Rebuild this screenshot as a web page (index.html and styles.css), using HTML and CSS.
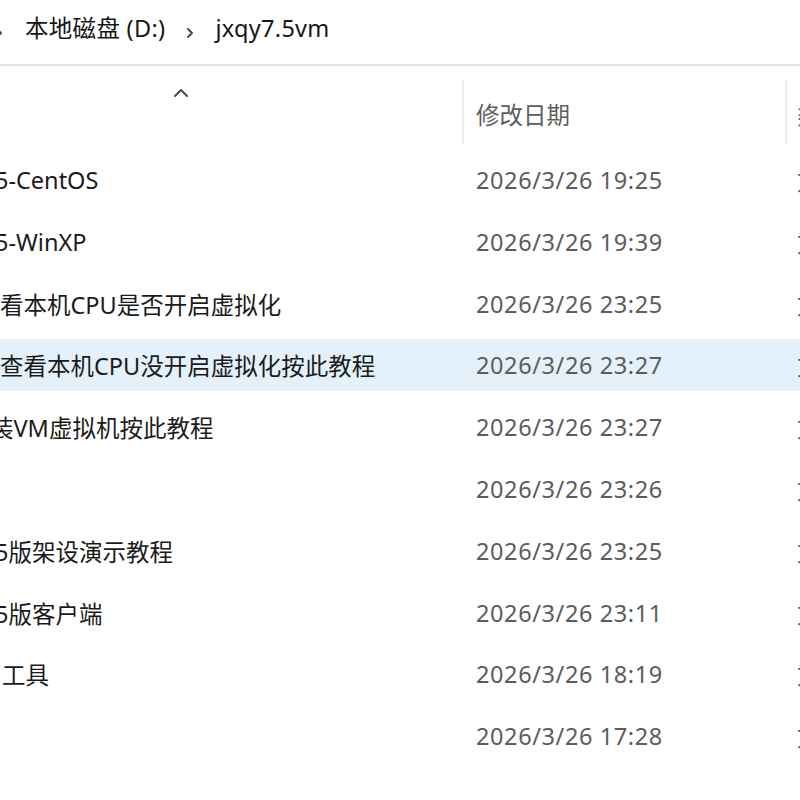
FILE: index.html
```html
<!DOCTYPE html>
<html lang="zh-CN">
  <head>
    <meta charset="UTF-8" />
    <meta name="viewport" content="width=device-width, initial-scale=1.0" />
    <title>jxqy7.5vm</title>
    <link rel="stylesheet" href="styles.css">
  </head>
  <body>
    <div class="explorer">
      <nav class="crumbs">
        <svg class="chev chev-cut" viewBox="0 0 8 12" width="8" height="12"><path d="M2 2l4 4-4 4" /></svg>
        <span class="crumb">本地磁盘 (D:)</span>
        <svg class="chev" viewBox="0 0 8 12" width="8" height="12"><path d="M2 2l4 4-4 4" /></svg>
        <span class="crumb">jxqy7.5vm</span>
      </nav>

      <div class="list">
        <div class="head">
          <div class="col-name">
            <svg class="sort" viewBox="0 0 16 10" width="16" height="10"><path d="M2 8l6-6 6 6" /></svg>
          </div>
          <div class="col-date">修改日期</div>
          <div class="col-type">类型</div>
        </div>

        <div class="rows">
          <div class="row">
            <div class="col-name"><span class="cut-digit">5-CentOS</span></div>
            <div class="col-date">2026/3/26 19:25</div>
            <div class="col-type">文件夹</div>
          </div>
          <div class="row">
            <div class="col-name"><span class="cut-digit">5-WinXP</span></div>
            <div class="col-date">2026/3/26 19:39</div>
            <div class="col-type">文件夹</div>
          </div>
          <div class="row">
            <div class="col-name"><span>看本机CPU是否开启虚拟化</span></div>
            <div class="col-date">2026/3/26 23:25</div>
            <div class="col-type">文件夹</div>
          </div>
          <div class="row selected">
            <div class="col-name"><span>查看本机CPU没开启虚拟化按此教程</span></div>
            <div class="col-date">2026/3/26 23:27</div>
            <div class="col-type">文件夹</div>
          </div>
          <div class="row">
            <div class="col-name"><span class="cut-half">装VM虚拟机按此教程</span></div>
            <div class="col-date">2026/3/26 23:27</div>
            <div class="col-type">文件夹</div>
          </div>
          <div class="row">
            <div class="col-name"><span></span></div>
            <div class="col-date">2026/3/26 23:26</div>
            <div class="col-type">文件夹</div>
          </div>
          <div class="row">
            <div class="col-name"><span class="cut-digit">5版架设演示教程</span></div>
            <div class="col-date">2026/3/26 23:25</div>
            <div class="col-type">文件夹</div>
          </div>
          <div class="row">
            <div class="col-name"><span class="cut-digit">5版客户端</span></div>
            <div class="col-date">2026/3/26 23:11</div>
            <div class="col-type">文件夹</div>
          </div>
          <div class="row">
            <div class="col-name"><span class="nudge">工具</span></div>
            <div class="col-date">2026/3/26 18:19</div>
            <div class="col-type">文件夹</div>
          </div>
          <div class="row">
            <div class="col-name"><span></span></div>
            <div class="col-date">2026/3/26 17:28</div>
            <div class="col-type">文件夹</div>
          </div>
        </div>
      </div>
    </div>
  </body>
</html>
```

FILE: styles.css
```css
body {
  margin: 0;
  background-color: #fff;
  overflow: hidden;
  font-family: "Noto Sans", "Noto Sans CJK SC", sans-serif;
  font-size: 23.5px;
  color: #1b1b1b;
}

.explorer {
  width: 800px;
  height: 800px;
  overflow: hidden;
}

/* address bar */
.crumbs {
  display: flex;
  align-items: center;
  height: 64px;
  border-bottom: 2px solid #e2e2e2;
  white-space: nowrap;
}

.crumbs .chev {
  flex: none;
  margin: 2px 21px 0 21px;
}

.crumbs .chev path,
.head .sort path {
  fill: none;
  stroke: #4a4a4a;
  stroke-width: 2;
  stroke-linecap: round;
  stroke-linejoin: round;
}

.crumbs .chev-cut {
  margin-left: -5px;
  margin-right: 22px;
}

.crumbs .crumb {
  line-height: 1;
  padding-bottom: 6px;
  letter-spacing: 0.3px;
  color: #161616;
}

/* details view: the name column starts left of the window */
.list {
  margin-left: -100px;
  width: 1000px;
}

.head,
.row {
  display: grid;
  grid-template-columns: 562px 323px 1fr;
  white-space: nowrap;
}

.head {
  margin-top: 14px;
  height: 64px;
  color: #5e5e5e;
}

.head .col-name {
  display: flex;
  justify-content: center;
  padding-top: 8px;
}

.head .col-date,
.head .col-type {
  border-left: 2px solid #ececec;
  padding-top: 17px;
}

.head .col-date {
  padding-left: 12px;
}

.head .col-type {
  padding-left: 10px;
}

.rows {
  display: flex;
  flex-direction: column;
  gap: 9.8px;
  margin-top: 10px;
}

.row {
  height: 52px;
  align-items: center;
}

.row.selected {
  background-color: #e4f1fb;
}

.row .col-name {
  overflow: hidden;
  padding-left: 100px;
}

.row .col-name span {
  display: block;
}

.row .col-name .cut-digit {
  margin-left: -5px;
}

.row .col-name .cut-half {
  margin-left: -10px;
}

.row .col-name .nudge {
  margin-left: 2px;
}

.row .col-date {
  padding-left: 14px;
  letter-spacing: 0.6px;
  color: #5c5c5c;
}

.row .col-type {
  padding-left: 12px;
  color: #5c5c5c;
}
```
